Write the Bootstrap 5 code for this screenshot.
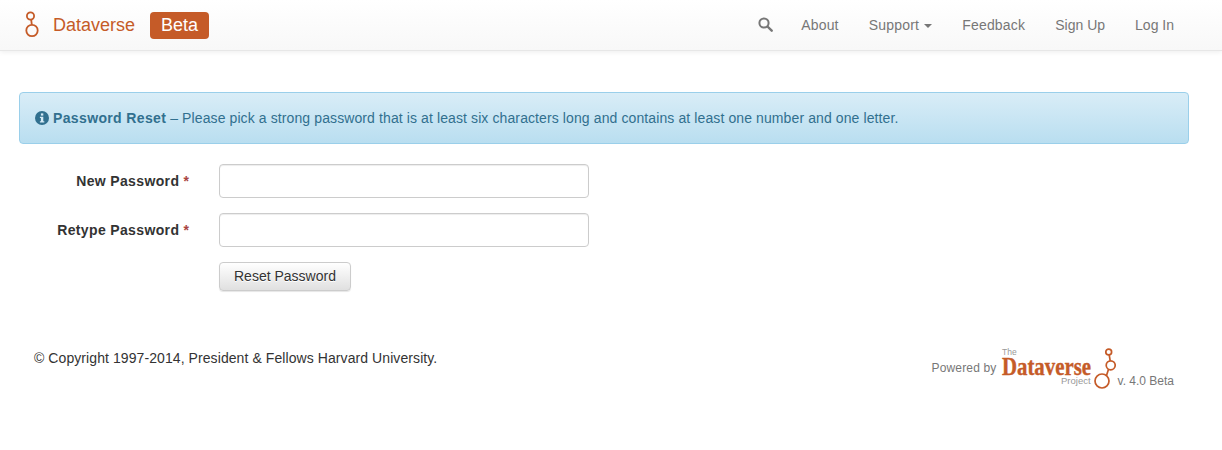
<!DOCTYPE html>
<html lang="en">
<head>
<meta charset="utf-8">
<title>Password Reset</title>
<link href="https://cdn.jsdelivr.net/npm/bootstrap@5.3.0/dist/css/bootstrap.min.css" rel="stylesheet">
<style>
body{font-family:"Liberation Sans",Arial,sans-serif;font-size:14px;line-height:20px;color:#333;background:#fff}
.dv-nav{height:51px;background:linear-gradient(to bottom,#fff,#f8f8f8);border-bottom:1px solid #e7e7e7;box-shadow:0 1px 5px rgba(0,0,0,.075);padding:0}
.dv-wrap{width:1170px;margin-left:19px}
.dv-brand{color:#c55b28;font-size:18px;line-height:20px;padding:0;margin:0}
.dv-brand svg{margin-left:5px;margin-right:13px}
.dv-beta{background:#c55b28;color:#fff;font-size:18px;line-height:19px;padding:4px 0;border-radius:4px;margin-left:15px;font-weight:400;width:59px;text-align:center}
.dv-links .nav-link{color:#777;padding:15px;font-size:14px;line-height:20px}
.dv-links .dv-wide{letter-spacing:.2px}
.dv-links .dropdown-toggle::after{border-top:4px solid;border-right:4px solid transparent;border-left:4px solid transparent;border-bottom:0;vertical-align:2px;margin-left:5px}
.dv-links .dv-search{padding:14px 13px 16px 15px}
.dv-alert{margin:41px 0 20px;padding:15px;height:52px;background:linear-gradient(to bottom,#d9edf7,#b9def0);border:1px solid #9acfea;border-radius:4px;color:#31708f;line-height:20px;letter-spacing:.105px}
.dv-alert strong{letter-spacing:.36px;font-weight:700}
.dv-alert svg{vertical-align:-2px}
.dv-row{--bs-gutter-x:30px;margin-bottom:15px}
.dv-label{font-weight:700;letter-spacing:.36px;text-align:right;color:#333;padding-top:7px;margin:0;padding-bottom:7px;line-height:20px}
.dv-req{color:#a94442;letter-spacing:0}
.dv-input{height:34px;padding:6px 12px;font-size:14px;border:1px solid #ccc;border-radius:4px;box-shadow:inset 0 1px 1px rgba(0,0,0,.075)}
.dv-btn{font-size:14px;line-height:20px;padding:3px 14px 5px;height:29px;color:#333;border:1px solid #ccc;border-radius:4px;background:linear-gradient(to bottom,#fff,#e0e0e0);box-shadow:0 1px 1px rgba(0,0,0,.1);text-shadow:0 1px 0 #fff}
.dv-foot{margin-top:57px;padding:0 15px}
.dv-copy{margin:0;letter-spacing:.08px}
.dv-power{color:#777;font-size:12px;line-height:16px}
.dv-by{margin:12px 4px 0 0;letter-spacing:.16px}
.dv-ver{margin:25px 0 0 2px}
.dv-logo-svg{display:block}
</style>
</head>
<body>
<nav class="navbar dv-nav">
  <div class="dv-wrap d-flex justify-content-between align-items-center">
    <div class="d-flex align-items-center">
      <a class="navbar-brand d-flex align-items-center dv-brand" href="#">
        <svg width="16" height="28" viewBox="0 0 16 28"><g fill="none" stroke="#c55b28" stroke-width="1.8"><circle cx="6.5" cy="5" r="3.6"/><circle cx="8" cy="19.5" r="5.7"/><path d="M7.2 8.6 7.8 13.8"/></g></svg>
        Dataverse
      </a>
      <span class="dv-beta">Beta</span>
    </div>
    <ul class="nav dv-links align-items-center">
      <li class="nav-item"><a class="nav-link dv-search" href="#" aria-label="Search"><svg width="15" height="15" viewBox="0 0 15 15" class="d-block"><circle cx="6" cy="6" r="4.6" fill="none" stroke="#777" stroke-width="2"/><path d="M9.5 9.5 13.7 13.7" stroke="#777" stroke-width="2.4" stroke-linecap="round"/></svg></a></li>
      <li class="nav-item"><a class="nav-link dv-wide" href="#">About</a></li>
      <li class="nav-item dropdown"><a class="nav-link dropdown-toggle dv-wide" href="#">Support</a></li>
      <li class="nav-item"><a class="nav-link dv-wide" href="#">Feedback</a></li>
      <li class="nav-item"><a class="nav-link" href="#">Sign Up</a></li>
      <li class="nav-item"><a class="nav-link" href="#">Log In</a></li>
    </ul>
  </div>
</nav>
<main class="dv-wrap">
  <div class="dv-alert" role="alert">
    <svg width="14" height="14" viewBox="0 0 14 14"><circle cx="7" cy="7" r="7" fill="#31708f"/><rect x="5.9" y="2.4" width="2.4" height="2.2" fill="#d4eaf5"/><path d="M4.9 5.7h3.4v4.5h1v1.3H4.9v-1.3h1V7H4.9z" fill="#d4eaf5"/></svg>
    <strong>Password Reset</strong> – Please pick a strong password that is at least six characters long and contains at least one number and one letter.
  </div>
  <form>
    <div class="row dv-row">
      <label class="col-2 dv-label" for="np">New Password <span class="dv-req">*</span></label>
      <div class="col-4"><input class="form-control dv-input" id="np" type="password"></div>
    </div>
    <div class="row dv-row">
      <label class="col-2 dv-label" for="rp">Retype Password <span class="dv-req">*</span></label>
      <div class="col-4"><input class="form-control dv-input" id="rp" type="password"></div>
    </div>
    <div class="row dv-row">
      <div class="col-4 offset-2"><button type="button" class="btn dv-btn">Reset Password</button></div>
    </div>
  </form>
  <footer class="d-flex justify-content-between align-items-start dv-foot">
    <p class="dv-copy">© Copyright 1997-2014, President &amp; Fellows Harvard University.</p>
    <div class="d-flex align-items-start dv-power">
      <span class="dv-by">Powered by</span>
      <svg class="dv-logo-svg" width="115" height="42" viewBox="0 0 115 42">
        <text x="1" y="7" font-family="Liberation Sans" font-size="8.5" fill="#999">The</text>
        <text x="1" y="27" font-family="Liberation Serif" font-weight="700" font-size="25" fill="#c55b28" stroke="#c55b28" stroke-width=".4" textLength="89" lengthAdjust="spacingAndGlyphs">Dataverse</text>
        <text x="60" y="36" font-family="Liberation Sans" font-size="9.5" fill="#999">Project</text>
        <g fill="none" stroke="#c55b28" stroke-width="1.7"><circle cx="101" cy="33" r="7"/><circle cx="109.7" cy="17.3" r="4.5"/><circle cx="107.7" cy="4" r="2.9"/><path d="M105.5 27.5 107.5 21.3M109.2 12.8 108.2 6.9"/></g>
      </svg>
      <span class="dv-ver">v. 4.0 Beta</span>
    </div>
  </footer>
</main>
<script src="https://cdn.jsdelivr.net/npm/bootstrap@5.3.0/dist/js/bootstrap.bundle.min.js"></script>
</body>
</html>
